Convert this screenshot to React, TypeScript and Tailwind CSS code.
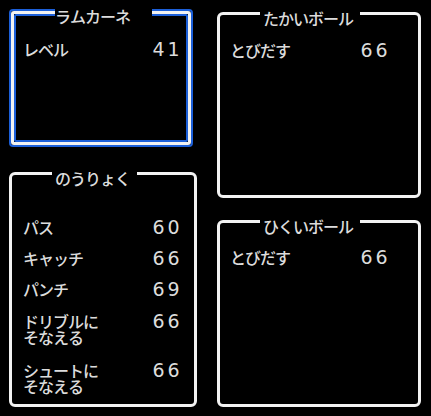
import type { ReactNode } from "react";

// Every glyph sits in a 15px cell, like the tile grid of the original screen
function Cells({ text }: { text: string }) {
  return (
    <>
      {[...text].map((c, i) => (
        <span key={i} className="inline-block w-[15px] text-center">
          {c}
        </span>
      ))}
    </>
  );
}

function Row({
  label,
  value,
  labelWidth,
  className = "",
}: {
  label: string[];
  value: string;
  labelWidth: string;
  className?: string;
}) {
  return (
    <div className={`flex ${className}`}>
      <div className={`flex flex-col ${labelWidth}`}>
        {label.map((line) => (
          <div key={line} className="h-[16px] whitespace-nowrap">
            <Cells text={line} />
          </div>
        ))}
      </div>
      <div className="h-[16px] whitespace-nowrap font-['DejaVu_Sans',sans-serif] text-[19px] leading-[16px]">
        <Cells text={value} />
      </div>
    </div>
  );
}

function Panel({
  title,
  titleClass,
  className,
  children,
}: {
  title: string;
  titleClass: string;
  className: string;
  children: ReactNode;
}) {
  return (
    <div className={`relative rounded-[6px] border-[3px] border-[#f2f2f2] ${className}`}>
      {/* title sits on the top border, cutting a gap into it */}
      <div className={`absolute top-[-5px] h-[16px] bg-black whitespace-nowrap ${titleClass}`}>
        <Cells text={title} />
      </div>
      {children}
    </div>
  );
}

export default function App() {
  return (
    <div className="flex h-[416px] w-[431px] overflow-hidden bg-black pl-[9px] font-['Noto_Sans_CJK_JP','Noto_Sans',sans-serif] text-[16px] font-medium leading-[16px] text-[#dcdcdc]">
      {/* Left column */}
      <div className="flex w-[188px] flex-col">
        {/* Selected player: blue / white / blue frame */}
        <div className="relative mt-[9px] h-[138px] w-[184px] rounded-[4px] border-2 border-[#1c5fd8]">
          <div className="h-full rounded-[3px] border-[3px] border-[#f2f2f2]">
            <div className="h-full rounded-[2px] border-2 border-[#1c5fd8] pl-[7px] pt-[25px]">
              <Row label={["レベル"]} value="41" labelWidth="w-[128px]" />
            </div>
          </div>
          <div className="absolute left-[44px] top-[-3px] h-[16px] bg-black pr-[22px] whitespace-nowrap">
            <Cells text="ラムカーネ" />
          </div>
        </div>

        <Panel
          title="のうりょく"
          titleClass="left-[40px] pl-[3px] pr-[7px]"
          className="mt-[25px] h-[235px] w-[188px] pl-[11px] pt-[44px]"
        >
          <Row label={["パス"]} value="60" labelWidth="w-[128px]" />
          <Row label={["キャッチ"]} value="66" labelWidth="w-[128px]" className="mt-[15px]" />
          <Row label={["パンチ"]} value="69" labelWidth="w-[128px]" className="mt-[15px]" />
          <Row label={["ドリブルに", "そなえる"]} value="66" labelWidth="w-[128px]" className="mt-[16px]" />
          <Row label={["シュートに", "そなえる"]} value="66" labelWidth="w-[128px]" className="mt-[17px]" />
        </Panel>
      </div>

      {/* Right column */}
      <div className="ml-[20px] flex w-[204px] flex-col">
        <Panel
          title="たかいボール"
          titleClass="left-[40px] pl-[3px] pr-[7px]"
          className="mt-[12px] h-[186px] w-[204px] pl-[10px] pt-[27px]"
        >
          <Row label={["とびだす"]} value="66" labelWidth="w-[129px]" />
        </Panel>

        <Panel
          title="ひくいボール"
          titleClass="left-[40px] pl-[3px] pr-[7px]"
          className="mt-[22px] h-[187px] w-[204px] pl-[10px] pt-[26px]"
        >
          <Row label={["とびだす"]} value="66" labelWidth="w-[129px]" />
        </Panel>
      </div>
    </div>
  );
}
